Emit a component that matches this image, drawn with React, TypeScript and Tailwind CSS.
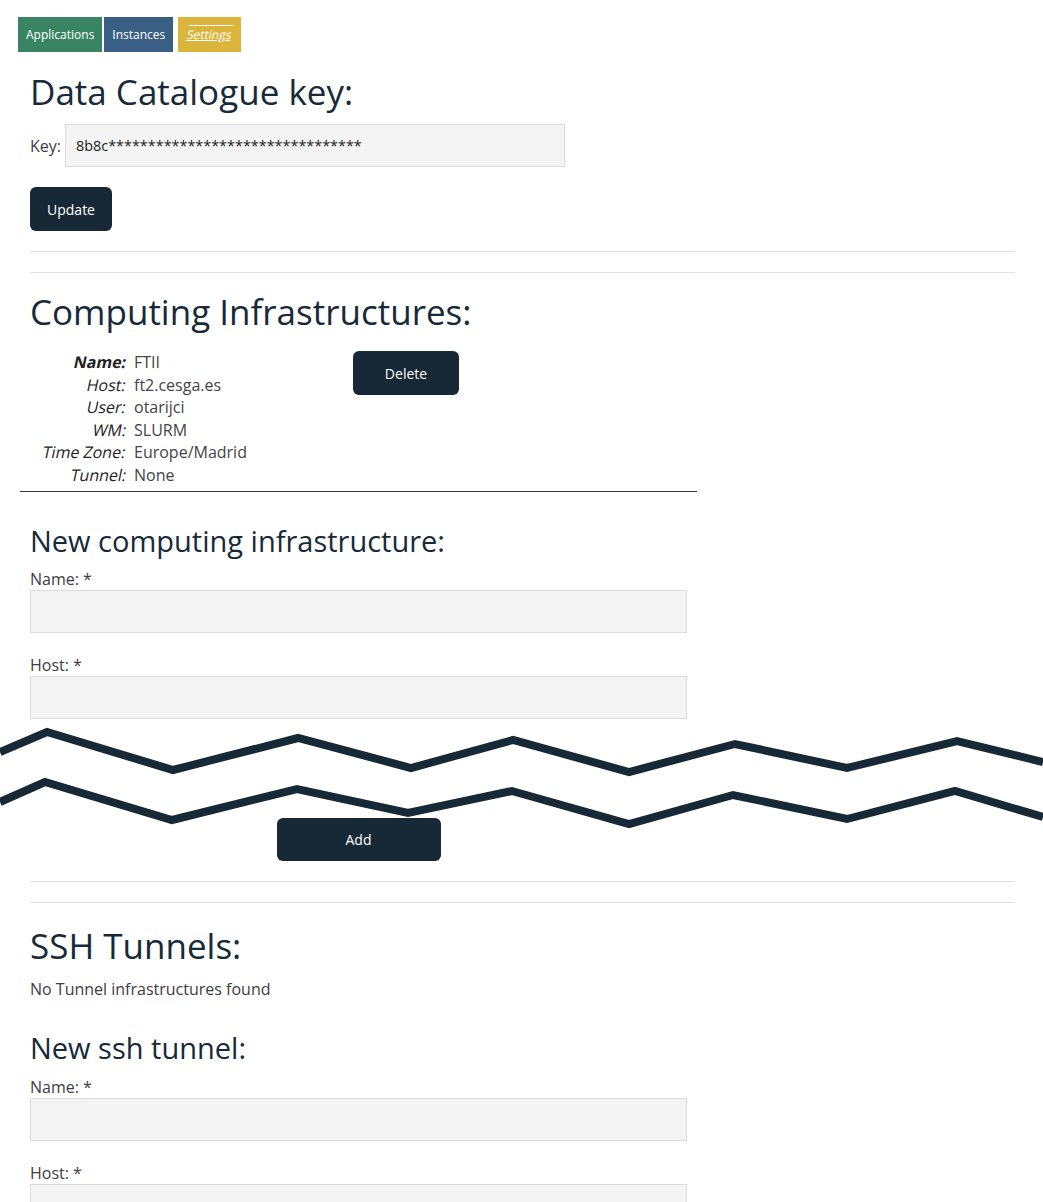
import React from 'react';

const fieldCls = "block w-[657px] h-[43px] bg-[#f4f4f4] border border-[#dcdcdc]";
const labelCls = "block text-[16px] leading-[22px] text-[#3d3d3d]";
const btnCls = "bg-[#172836] text-white text-[14px] rounded-[6px] flex items-center justify-center";
const h1Cls = "text-[35px] leading-[42px] text-[#172a3a]";
const h2Cls = "text-[29px] leading-[34px] text-[#172a3a]";

const infra = [
  { label: 'Name:', value: 'FTII', strong: true },
  { label: 'Host:', value: 'ft2.cesga.es' },
  { label: 'User:', value: 'otarijci' },
  { label: 'WM:', value: 'SLURM' },
  { label: 'Time Zone:', value: 'Europe/Madrid' },
  { label: 'Tunnel:', value: 'None' },
];

function Field({ label, className = '' }: { label: string; className?: string }) {
  return (
    <div className={className}>
      <label className={labelCls}>{label}</label>
      <div className={fieldCls} />
    </div>
  );
}

function Tear() {
  // torn-page marks drawn over the cut part of the form
  const top = "0,32 47,12 173,50 298,18 411,48 513,20 629,52 735,24 847,48 957,21 1043,42";
  const bottom = "0,82 45,62 172,100 297,69 408,93 512,71 629,104 733,75 847,99 955,71 1043,97";
  return (
    <svg className="absolute left-0 top-[720px] pointer-events-none" width="1043" height="112" viewBox="0 0 1043 112">
      <polyline points={top} fill="none" stroke="#172836" strokeWidth="8" strokeLinejoin="miter" />
      <polyline points={bottom} fill="none" stroke="#172836" strokeWidth="8" strokeLinejoin="miter" />
    </svg>
  );
}

export default function App() {
  return (
    <div className="relative h-[1202px] bg-white font-['Open_Sans',sans-serif] text-[#3d3d3d] pl-[18px] pr-[28px] pt-[17px] overflow-hidden">
      {/* Tabs */}
      <div className="flex items-stretch h-[35px] text-[12px] text-white">
        <div className="bg-[#398563] px-[8px] flex items-center">Applications</div>
        <div className="bg-[#3a5f85] px-[8px] flex items-center ml-[2px]">Instances</div>
        <div className="bg-[#dbb53b] px-[9px] flex items-center ml-[5px]">
          <span className="inline-block -skew-x-12 [text-decoration-line:underline_overline]">Settings</span>
        </div>
      </div>

      <div className="pl-[12px]">
        {/* Data Catalogue key */}
        <h1 className={`mt-[19px] ${h1Cls}`}>Data Catalogue key:</h1>
        <div className="mt-[11px] flex items-center">
          <span className="text-[16px] w-[35px]">Key:</span>
          <div className="w-[500px] h-[43px] bg-[#f4f4f4] border border-[#dcdcdc] flex items-center pl-[10px] text-[14.4px] text-[#222]">
            8b8c********************************
          </div>
        </div>
        <button className={`${btnCls} mt-[20px] w-[82px] h-[44px]`}>Update</button>

        <div className="mt-[20px] border-t border-[#e2e2e2]" />
        <div className="mt-[20px] border-t border-[#e2e2e2]" />

        {/* Computing Infrastructures */}
        <h1 className={`mt-[18px] ${h1Cls}`}>Computing Infrastructures:</h1>
        <div className="mt-[18px] -ml-[10px] w-[677px] border-b border-[#333] pb-[4px] flex items-start">
          <div className="w-[333px] grid grid-cols-[106px_1fr] gap-x-[8px] text-[16px] leading-[22.6px]">
            {infra.map(r => (
              <React.Fragment key={r.label}>
                <span className="text-right text-[#222]">
                  <span className={`inline-block -skew-x-12 ${r.strong ? 'font-bold' : ''}`}>{r.label}</span>
                </span>
                <span className="text-[#444]">{r.value}</span>
              </React.Fragment>
            ))}
          </div>
          <button className={`${btnCls} w-[106px] h-[44px]`}>Delete</button>
        </div>

        <h2 className={`mt-[32px] ${h2Cls}`}>New computing infrastructure:</h2>
        <Field label="Name: *" className="mt-[10px]" />
        <Field label="Host: *" className="mt-[21px]" />

        <div className="w-[657px] flex justify-center mt-[99px]">
          <button className={`${btnCls} w-[164px] h-[43px]`}>Add</button>
        </div>

        <div className="mt-[20px] border-t border-[#e2e2e2]" />
        <div className="mt-[20px] border-t border-[#e2e2e2]" />

        {/* SSH Tunnels */}
        <h1 className={`mt-[22px] ${h1Cls}`}>SSH Tunnels:</h1>
        <p className="mt-[11px] text-[16px] leading-[22px]">No Tunnel infrastructures found</p>

        <h2 className={`mt-[31px] ${h2Cls}`}>New ssh tunnel:</h2>
        <Field label="Name: *" className="mt-[11px]" />
        <Field label="Host: *" className="mt-[21px]" />
      </div>

      <Tear />
    </div>
  );
}
